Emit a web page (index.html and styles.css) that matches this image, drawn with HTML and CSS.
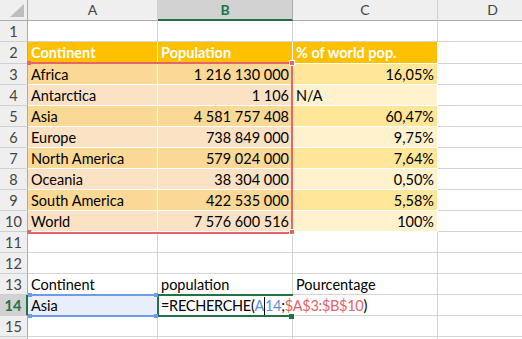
FILE: index.html
```html
<!DOCTYPE html>
<html lang="fr">
<head>
    <meta charset="UTF-8">
    <title>Feuil1</title>
    <link rel="stylesheet" href="styles.css">
</head>
<body>
    <div class="sheet">
        <div class="grid">
            <!-- en-têtes de colonnes -->
            <div class="corner">
                <svg width="14" height="13" viewBox="0 0 14 13"><polygon points="14,0 14,13 0,13" fill="#bdbdbd"/></svg>
            </div>
            <div class="colhead">A</div>
            <div class="colhead sel">B</div>
            <div class="colhead">C</div>
            <div class="colhead">D</div>

            <!-- 1 -->
            <div class="rowhead">1</div>
            <div class="cell"></div><div class="cell"></div><div class="cell"></div><div class="cell"></div>

            <!-- 2 : en-tête du tableau -->
            <div class="rowhead">2</div>
            <div class="cell t th">Continent</div>
            <div class="cell t th">Population</div>
            <div class="cell t th">% of world pop.</div>
            <div class="cell"></div>

            <div class="rowhead">3</div>
            <div class="cell t ab1">Africa</div>
            <div class="cell t ab1 num">1 216 130 000</div>
            <div class="cell t c1 num">16,05%</div>
            <div class="cell"></div>

            <div class="rowhead">4</div>
            <div class="cell t ab2">Antarctica</div>
            <div class="cell t ab2 num">1 106</div>
            <div class="cell t c2">N/A</div>
            <div class="cell"></div>

            <div class="rowhead">5</div>
            <div class="cell t ab1">Asia</div>
            <div class="cell t ab1 num">4 581 757 408</div>
            <div class="cell t c1 num">60,47%</div>
            <div class="cell"></div>

            <div class="rowhead">6</div>
            <div class="cell t ab2">Europe</div>
            <div class="cell t ab2 num">738 849 000</div>
            <div class="cell t c2 num">9,75%</div>
            <div class="cell"></div>

            <div class="rowhead">7</div>
            <div class="cell t ab1">North America</div>
            <div class="cell t ab1 num">579 024 000</div>
            <div class="cell t c1 num">7,64%</div>
            <div class="cell"></div>

            <div class="rowhead">8</div>
            <div class="cell t ab2">Oceania</div>
            <div class="cell t ab2 num">38 304 000</div>
            <div class="cell t c2 num">0,50%</div>
            <div class="cell"></div>

            <div class="rowhead">9</div>
            <div class="cell t ab1">South America</div>
            <div class="cell t ab1 num">422 535 000</div>
            <div class="cell t c1 num">5,58%</div>
            <div class="cell"></div>

            <div class="rowhead">10</div>
            <div class="cell t ab2">World</div>
            <div class="cell t ab2 num">7 576 600 516</div>
            <div class="cell t c2 num">100%</div>
            <div class="cell"></div>

            <div class="rowhead">11</div>
            <div class="cell"></div><div class="cell"></div><div class="cell"></div><div class="cell"></div>

            <div class="rowhead">12</div>
            <div class="cell"></div><div class="cell"></div><div class="cell"></div><div class="cell"></div>

            <div class="rowhead">13</div>
            <div class="cell">Continent</div>
            <div class="cell">population</div>
            <div class="cell">Pourcentage</div>
            <div class="cell"></div>

            <div class="rowhead sel">14</div>
            <div class="cell picked">Asia</div>
            <div class="cell editing">=RECHERCHE(<span class="ref-blue">A</span><span class="caret"></span><span class="ref-blue">14</span>;<span class="ref-red">$A$3:$B$10</span>)</div>
            <div class="cell"></div>
            <div class="cell"></div>

            <div class="rowhead">15</div>
            <div class="cell"></div><div class="cell"></div><div class="cell"></div><div class="cell"></div>

            <div class="rowhead"></div>
            <div class="cell"></div><div class="cell"></div><div class="cell"></div><div class="cell"></div>
        </div>

        <!-- plage $A$3:$B$10 -->
        <div class="range-red"></div>
        <div class="knob red" style="left: 27px; top: 61px;"></div>
        <div class="knob red big" style="left: 289px; top: 60px;"></div>
        <div class="knob red" style="left: 27px; top: 230px;"></div>
        <div class="knob red big" style="left: 289px; top: 229px;"></div>

        <!-- plage A14 -->
        <div class="range-blue"></div>
        <div class="knob blue" style="left: 28px; top: 293px;"></div>
        <div class="knob blue" style="left: 154px; top: 293px;"></div>
        <div class="knob blue" style="left: 28px; top: 314px;"></div>
        <div class="knob blue" style="left: 154px; top: 314px;"></div>

        <!-- cellule active B14 -->
        <div class="active-cell"></div>
        <div class="knob green" style="left: 289px; top: 314px;"></div>
    </div>
</body>
</html>
```

FILE: styles.css
```css
* {
    margin: 0;
    padding: 0;
    box-sizing: border-box;
}

body {
    background: #ffffff;
    font-family: Lato, "Liberation Sans", sans-serif;
    font-size: 14.5px;
    color: #000;
}

.sheet {
    position: relative;
    width: 522px;
    height: 339px;
    overflow: hidden;
}

/* grille */
.grid {
    display: grid;
    grid-template-columns: 28px 130px 135px 145px 110px;
    grid-template-rows: 21px 21px 22px;
    grid-auto-rows: 21px;
}

.cell {
    border-right: 1px solid #d4d4d4;
    border-bottom: 1px solid #d4d4d4;
    padding: 2px 3px 0;
    line-height: 18px;
    white-space: nowrap;
}

.num {
    text-align: right;
}

/* en-têtes */
.corner {
    background: #efefef;
    border-right: 1px solid #ababab;
    border-bottom: 1px solid #ababab;
    display: flex;
    align-items: flex-end;
    justify-content: flex-end;
    padding: 0 3px 3px 0;
}

.colhead {
    background: #efefef;
    border-right: 1px solid #d0d0d0;
    border-bottom: 1px solid #ababab;
    color: #444;
    text-align: center;
    line-height: 20px;
    font-size: 14px;
}

.colhead.sel {
    background: #d2d2d2;
    color: #217346;
    font-weight: 700;
    border-bottom: 2px solid #217346;
    border-right-color: #ababab;
}

.rowhead {
    background: #efefef;
    border-right: 1px solid #ababab;
    border-bottom: 1px solid #d0d0d0;
    color: #444;
    text-align: center;
    line-height: 20px;
    font-size: 14.5px;
    padding-top: 1px;
}

.rowhead.sel {
    background: #d2d2d2;
    color: #217346;
    font-weight: 700;
    border-right: 2px solid #217346;
}

/* tableau */
.t {
    border-color: #ffffff;
}

.th {
    background: #ffc000;
    color: #ffffff;
    font-weight: 700;
}

.ab1 { background: #fad896; }
.ab2 { background: #fbe2c4; }
.c1 { background: #ffe699; }
.c2 { background: #fff2cc; }

/* ligne 14 */
.picked {
    background: #e9effa;
}

.editing {
    border-right: none;
    overflow: visible;
    position: relative;
    z-index: 1;
    letter-spacing: -0.3px;
}

.ref-blue { color: #5b8ee6; }
.ref-red { color: #e5636a; }

.caret {
    display: inline-block;
    width: 0;
    height: 19px;
    border-left: 1px solid #000;
    vertical-align: -5px;
}

/* sélections */
.range-red {
    position: absolute;
    left: 28px;
    top: 62px;
    width: 265px;
    height: 172px;
    border: 2px solid #e5656b;
    border-left: none;
}

.range-blue {
    position: absolute;
    left: 28px;
    top: 294px;
    width: 130px;
    height: 23px;
    border-top: 2px solid #6d9ce8;
    border-bottom: 2px solid #6d9ce8;
}

.active-cell {
    position: absolute;
    left: 157px;
    top: 294px;
    width: 136px;
    height: 23px;
    border: 2px solid #217346;
    border-right: none;
    z-index: 2;
}

.knob {
    position: absolute;
    width: 4px;
    height: 4px;
    z-index: 3;
}

.knob.big {
    width: 6px;
    height: 6px;
    border: 1px solid #fff;
}

.knob.red { background: #e5656b; }
.knob.blue { background: #6d9ce8; }
.knob.green {
    background: #217346;
    width: 5px;
    height: 5px;
}
```
